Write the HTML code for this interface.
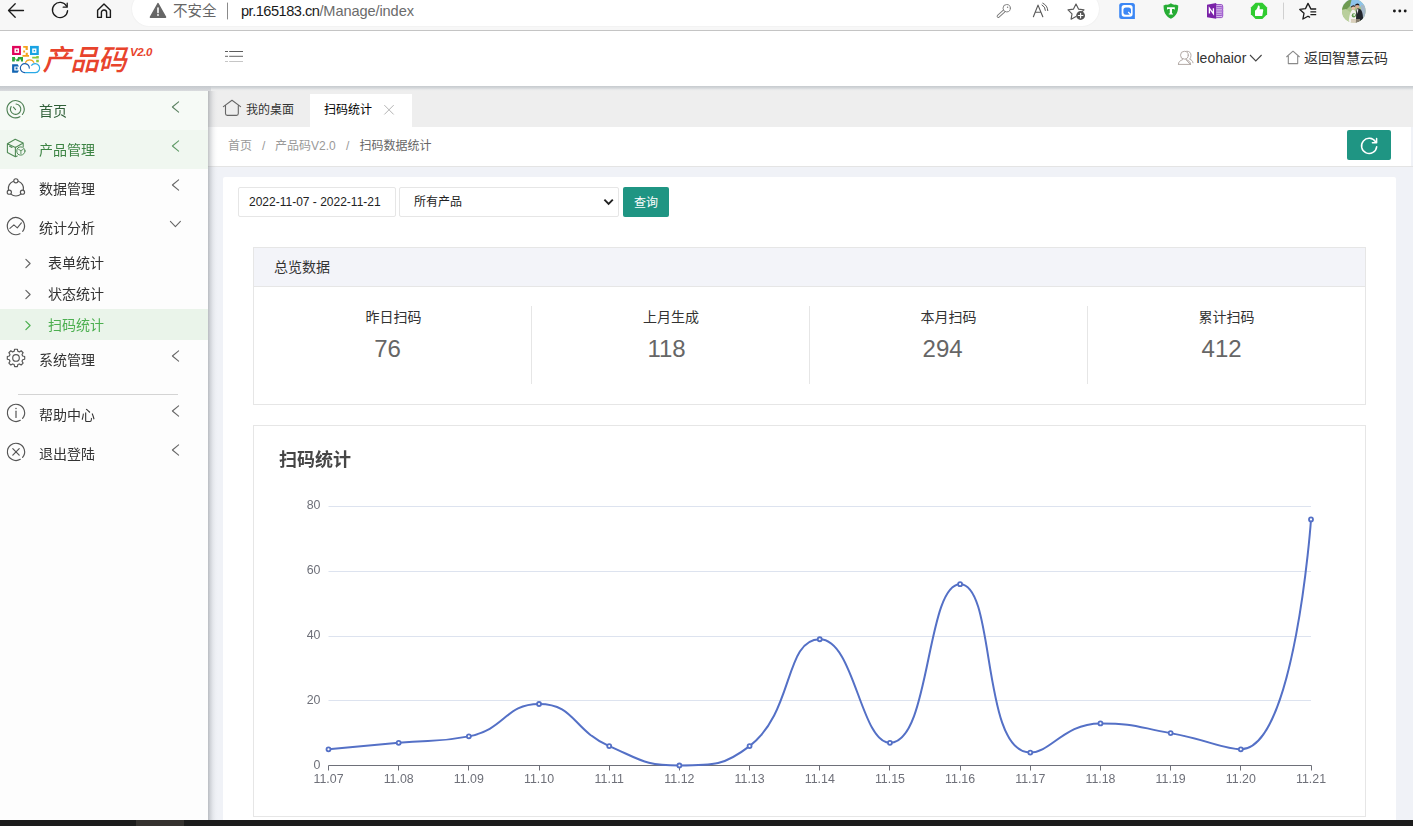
<!DOCTYPE html>
<html lang="zh-CN">
<head>
<meta charset="utf-8">
<title>产品码 V2.0</title>
<style>
*{box-sizing:border-box;margin:0;padding:0}
html,body{width:1413px;height:826px;overflow:hidden;background:#f0f2f7}
body{font-family:"Liberation Sans","Noto Sans CJK SC",sans-serif;font-size:14px;color:#333;position:relative}
#root{position:absolute;left:0;top:0;width:1413px;height:826px;overflow:hidden}
.gl{position:absolute;left:0;top:0;width:0;height:0;will-change:transform}
.abs{position:absolute}
svg{position:absolute;overflow:visible}
.t{position:absolute;white-space:nowrap;line-height:1}
/* browser toolbar */
#tb{left:0;top:0;width:1413px;height:30px;background:#f7f7f7}
#tbline{left:0;top:30px;width:1413px;height:1px;background:#c4c4c4}
#pill{left:132px;top:-8px;width:967px;height:33.500px;border-radius:17px;background:#fff;box-shadow:0 0 2px rgba(0,0,0,.07)}
/* app header */
#hd{left:0;top:31px;width:1413px;height:55px;background:#fff}
#hdsh{left:208px;top:86px;width:1205px;height:5px;background:linear-gradient(#c6cace,#d4d7da 40%,#e9eaeb 75%,#eeeeee)}
#hdsh2{left:0;top:86px;width:211px;height:5px;background:linear-gradient(#c5c9cd,#cfd2d6 60%,#dadcdf)}
/* sidebar */
#sb{left:0;top:91px;width:208px;height:730px;background:#fdfdfd}
#sbsh{left:208px;top:90px;width:10px;height:730px;background:linear-gradient(90deg,rgba(115,120,126,.44),rgba(130,135,142,.27) 25%,rgba(150,155,162,.13) 50%,rgba(180,182,190,.04) 78%,rgba(200,200,205,0))}
.mi{position:absolute;left:0;width:208px;height:39px}
.mi .t{left:39px;top:13px;font-size:14px;color:#333}
.si{position:absolute;left:0;width:208px;height:31px}
.si .t{left:48px;top:9px;font-size:14px;color:#333}
/* main */
#tabs{left:208px;top:91px;width:1205px;height:36px;background:#eeeeee}
#tabact{left:310px;top:94px;width:102px;height:33px;background:#fff}
#bc{left:208px;top:127px;width:1203px;height:39px;background:#fff}
#bcline{left:208px;top:166px;width:1205px;height:1px;background:#e4e4e4}
#card{left:223px;top:177px;width:1173px;height:660px;background:#fff;border-radius:2px}
#taskbar{left:0;top:819.700px;width:1413px;height:6.300px;background:#1c1c1c}
#taskhl{left:136px;top:819.700px;width:48px;height:6.300px;background:#35322f}
</style>
</head>
<body>
<div id="root">
<!-- ===== browser toolbar ===== -->
<div class="abs" id="tb"></div>
<div class="abs" id="pill"></div>
<div class="abs" id="tbline"></div>
<!--TOOLBAR--><svg style="left:0;top:0" width="1413" height="30" viewBox="0 0 1413 30" fill="none" stroke-linecap="round" stroke-linejoin="round">
 <!-- back -->
 <path d="M23.5 10.5H8.6M15.2 3.8L8.5 10.5L15.2 17.2" stroke="#1b1b1b" stroke-width="1.3"/>
 <!-- refresh -->
 <path d="M66.6 6.2A7.6 7.6 0 1 0 67.6 10.6" stroke="#1b1b1b" stroke-width="1.3"/>
 <path d="M67.2 3.2V7.2H63.2" stroke="#1b1b1b" stroke-width="1.3"/>
 <!-- home -->
 <path d="M97.6 10.2L104 4L110.4 10.2V17.4H106.6V12.6A2.6 2.6 0 0 0 101.4 12.6V17.4H97.6Z" stroke="#1b1b1b" stroke-width="1.4"/>
 <!-- warning -->
 <path d="M158 3.6L165.6 17.2H150.4Z" fill="#666" stroke="#666" stroke-width="1.4"/>
 <path d="M158 8V12.6" stroke="#fff" stroke-width="1.6"/>
 <circle cx="158" cy="15" r="0.9" fill="#fff"/>
 <!-- separator -->
 <path d="M227.5 3V19" stroke="#8a8a8a" stroke-width="1"/>
 <!-- key -->
 <path d="M1004.400 10.800L998.300 16.200" stroke="#7d7d7d" stroke-width="3.300"/>
 <path d="M1004.400 10.800L998.300 16.200" stroke="#fff" stroke-width="1.500"/>
 <circle cx="1006.700" cy="8.200" r="3.700" fill="#fff" stroke="#7d7d7d" stroke-width="0.950"/>
 <circle cx="1007.600" cy="7.300" r="0.700" fill="#7d7d7d" stroke="none"/>
 <!-- read aloud -->
 <path d="M1033.400 16.700L1038 5.100L1042.800 16.700M1035.200 12.200H1040.800" stroke="#5a5a5a" stroke-width="1.150"/>
 <path d="M1042 5A6 6 0 0 1 1045.400 10.400M1042.800 3.200A8.600 8.600 0 0 1 1047.800 10.600" stroke="#5a5a5a" stroke-width="1"/>
 <!-- star plus -->
 <path d="M1076 4L1078.500 9.100L1084 9.900L1080 13.800L1080.900 17.600M1076 4L1073.500 9.100L1068 9.900L1072 13.800L1071.100 19.200L1076 16.600" stroke="#5a5a5a" stroke-width="1.150"/>
 <circle cx="1080.600" cy="15.500" r="4.400" fill="#555" stroke="none"/>
 <path d="M1078.300 15.500H1082.900M1080.600 13.200V17.800" stroke="#fff" stroke-width="1.150"/>
 <!-- ext Q -->
 <path d="M1121.700 3H1132.400A2.500 2.500 0 0 1 1134.900 5.500V19H1121.700A2.500 2.500 0 0 1 1119.200 16.500V5.500A2.500 2.500 0 0 1 1121.700 3Z" fill="#3b87f5" stroke="none"/>
 <rect x="1121.600" y="5" width="11" height="11.700" rx="2.600" fill="#fff" stroke="none"/>
 <rect x="1123.400" y="7.400" width="7.600" height="7.400" rx="2.500" fill="#3b87f5" stroke="none"/>
 <path d="M1128.200 12L1131.400 15.200" stroke="#fff" stroke-width="1.300" stroke-linecap="butt"/>
 <!-- shield -->
 <path d="M1163.600 5.200C1164.600 5.400 1165.400 5 1165.800 4.400C1167.400 5 1169.400 4.600 1170.900 3.300C1172.400 4.600 1174.400 5 1176 4.400C1176.400 5 1177.200 5.400 1178.200 5.200C1178.400 11.600 1176.400 16 1170.900 18.800C1165.400 16 1163.400 11.600 1163.600 5.200Z" fill="#27ad35" stroke="none"/>
 <path d="M1167 7.200H1174.800V9.600H1174V8.900H1172V13.600H1173V14.600H1168.800V13.600H1169.800V8.900H1167.800V9.600H1167Z" fill="#fff" stroke="none"/>
 <!-- onenote -->
 <rect x="1215" y="4.600" width="7.600" height="13" rx="1.200" fill="#d9bfec" stroke="#8a3dbd" stroke-width="0.900"/>
 <path d="M1216.400 6.600H1221.800M1216.400 8.800H1221.800M1216.400 11H1221.800M1216.400 13.200H1221.800M1216.400 15.400H1221.800" stroke="#9a57c8" stroke-width="1.100" stroke-linecap="butt"/>
 <path d="M1221.600 6.400H1223.200V9H1221.600ZM1221.600 9.800H1223.200V12.400H1221.600ZM1221.600 13.200H1223.200V15.800H1221.600Z" fill="#a868d4" stroke="none"/>
 <path d="M1207 4.700L1216.200 3V18.800L1207 17.200Z" fill="#7a22a8" stroke="none"/>
 <path d="M1209.400 13.600V8.200L1213.400 13.600V8.200" stroke="#fff" stroke-width="1.350" stroke-linecap="butt" stroke-linejoin="miter"/>
 <!-- thumb -->
 <path d="M1255.600 2.800H1262.400L1267.100 7.500V14.300L1262.400 19H1255.600L1250.900 14.300V7.500Z" fill="#30cc30" stroke="none"/>
 <path d="M1255.200 10.600C1256.800 9.600 1257.600 8 1258 5.600C1259.400 5.200 1260.200 6.600 1259.600 9.200H1262.400C1263.200 9.200 1263.400 9.800 1263.200 10.600L1262.400 15.200C1262.300 15.800 1262 16.100 1261.400 16.100H1255.800C1255.200 16.100 1255 15.800 1255 15.200V11.200C1255 10.900 1255 10.700 1255.200 10.600Z" fill="#fff" stroke="none"/>
 <!-- separator 2 -->
 <path d="M1283.500 3V19" stroke="#d0d0d0" stroke-width="1"/>
 <!-- favorites -->
 <path d="M1310.600 8.400L1308 3.400L1305.500 8.600L1299.800 9.400L1304 13.300L1302.900 19L1308 16.200L1309.600 17.100" stroke="#1b1b1b" stroke-width="1.300"/>
 <path d="M1310.400 9H1316.200M1310.400 11.800H1316.200M1310.400 14.600H1316.200" stroke="#1b1b1b" stroke-width="1.300" stroke-linecap="butt"/>
 <!-- dots -->
 <circle cx="1394.400" cy="11" r="1.450" fill="#1b1b1b" stroke="none"/><circle cx="1399.800" cy="11" r="1.450" fill="#1b1b1b" stroke="none"/><circle cx="1405.200" cy="11" r="1.450" fill="#1b1b1b" stroke="none"/>
 <!-- avatar -->
 <defs><clipPath id="avc"><circle cx="1353.800" cy="11" r="11.800"/></clipPath>
 <linearGradient id="avg" x1="0" y1="0" x2="0" y2="1"><stop offset="0" stop-color="#b9c7c4"/><stop offset="0.550" stop-color="#9fb39a"/><stop offset="1" stop-color="#7f9a6f"/></linearGradient></defs>
 <g clip-path="url(#avc)" stroke="none">
  <rect x="1341" y="-2" width="26" height="26" fill="#a9c58a"/>
  <rect x="1341" y="-2" width="26" height="8.500" fill="#8ec4ea"/>
  <path d="M1341 -2H1352L1350 6L1346 10H1341Z" fill="#6f9a52"/>
  <path d="M1341 10L1346 9L1350 12V23H1341Z" fill="#b9cf9c"/>
  <path d="M1361 5H1367V23H1361Z" fill="#a5b8c9"/>
  <path d="M1353.200 9.800C1355.800 10 1356.800 13 1357 23H1348.600C1349.200 15 1350.600 10 1353.200 9.800Z" fill="#f3f1ee"/>
  <path d="M1357.400 8.200C1361.400 8.400 1363 11 1363.200 21L1358 23H1355.800C1356.600 16 1355.600 9 1357.400 8.200Z" fill="#23262c"/>
  <path d="M1356.600 9.200L1357.600 14L1358.400 9.200Z" fill="#e9e9ee"/>
  <circle cx="1353.200" cy="8" r="1.900" fill="#e6bfa6"/><circle cx="1357.200" cy="6.600" r="2" fill="#d9ad92"/>
  <path d="M1350.800 7.800A2.400 2.400 0 0 1 1355.400 6.800L1353 6.600Z" fill="#2b2320"/><path d="M1355 5.800A2.300 2.300 0 0 1 1359.600 5.600L1357 5Z" fill="#1f1a18"/>
  <circle cx="1353.800" cy="15.400" r="2.100" fill="#5f9a4e"/><circle cx="1354.200" cy="15" r="0.900" fill="#f5f5f0"/>
  <path d="M1351 19H1360V23H1351Z" fill="#c8b79a" opacity="0.600"/>
 </g>
</svg>
<div class="t" style="left:173px;top:4px;font-size:14.5px;color:#666">不安全</div>
<div class="t" style="left:241px;top:3.5px;font-size:14.6px;color:#6b6b6b;letter-spacing:-0.1px"><span style="color:#1a1a1a;letter-spacing:-0.500px">pr.165183.cn</span>/Manage/index</div>
<!--/TOOLBAR-->
<!-- ===== app header ===== -->
<div class="abs" id="hd"></div>
<!--HEADER--><svg style="left:0;top:31px" width="1413" height="55" viewBox="0 31 1413 55" fill="none">
 <!-- logo: qr + cloud -->
 <g stroke="none">
  <rect x="12.050" y="45.900" width="8.850" height="9.100" fill="#e0065c"/>
  <rect x="14.450" y="48.300" width="4.600" height="4.600" fill="#fff"/>
  <rect x="16" y="49.800" width="1.600" height="1.600" fill="#e0065c"/>
  <path d="M23.200 46H27.800V49.900H25.600V47.700H23.200ZM23.200 50.400H25.100V52.600H23.200ZM25.700 52.800H27.800V55H29V56.700H22.500V55H25.700Z" fill="#f5a21d"/>
  <rect x="30" y="45.900" width="8.800" height="9.100" fill="#1aa3e3"/>
  <rect x="32.200" y="48.500" width="4.200" height="4.400" fill="#fff"/>
  <rect x="33.600" y="49.900" width="1.500" height="1.600" fill="#1aa3e3"/>
  <path d="M12.100 57.100H15V58.300L16.400 59.400L17.900 58.300V57.100H23V61.600H20.900V59.500H19.300V61.200H16.200V59.500H14.800V61.600H12.100Z" fill="#2da639"/>
  <path d="M32.200 56.800H36.300V56H38.800V58.600H32.200ZM36.200 59.800H38.800V62.300H36.200Z" fill="#8cc63e"/>
  <path d="M12.100 64.200H17.600L19 66.500H14.300V70.500H19L17.600 72.800H12.100Z" fill="#1265b3"/>
  <rect x="15.600" y="67.400" width="1.900" height="2" fill="#1265b3"/>
 </g>
 <path d="M25.300 62.900A4.700 4.700 0 0 1 34.100 62.900" stroke="#f5a623" stroke-width="1.150"/>
 <path d="M25 72.600A4.500 4.500 0 1 1 29.300 68.600" stroke="#1a5fae" stroke-width="1.150"/>
 <path d="M31.300 65.600A4.550 4.550 0 1 1 35.200 72.650H25" stroke="#29a9e6" stroke-width="1.150"/>
 <!-- menu toggle -->
 <g stroke-width="1.100" stroke-linecap="butt">
  <path d="M229.200 51.500H243M225 51.500H228" stroke="#5c5c5c"/>
  <path d="M229.200 56.400H243M225 56.400H228" stroke="#838383"/>
  <path d="M229.200 61.500H243M225 61.500H228" stroke="#c6c6c6"/>
 </g>
 <!-- user icon -->
 <g stroke="#b3aaa6" stroke-width="1" stroke-linejoin="round" stroke-linecap="round">
  <circle cx="1184.400" cy="55.200" r="3.900"/>
  <path d="M1178.400 64.400C1178.400 61.800 1179.800 60.800 1182.600 59.600M1186.200 59.600C1189 60.800 1190.600 61.800 1190.600 64.400Z"/>
  <path d="M1178.400 64.400H1190.600"/>
  <path d="M1186.800 51.200C1189.400 51 1191.200 53 1191 55.600C1190.900 57.200 1190.400 58.400 1189.600 59.200C1191.800 60 1192.800 61 1193 62.800"/>
 </g>
 <!-- chevron down -->
 <path d="M1250 55L1255.800 61L1261.600 55" stroke="#444" stroke-width="1.100"/>
 <!-- home outline -->
 <path d="M1286.400 57L1293 51.200L1299.600 57M1288.300 56V63.600H1297.700V56" stroke="#8a8a8a" stroke-width="1.100" stroke-linejoin="round"/>
</svg>
<div class="t" style="left:42.600px;top:45.500px;font-size:28.600px;font-weight:500;font-style:italic;color:#e8432c;letter-spacing:-0.900px">产品码</div>
<div class="t" style="left:130px;top:46.500px;font-size:11.500px;font-weight:bold;font-style:italic;color:#e8432c;letter-spacing:-0.400px">V2.0</div>
<div class="t" style="left:1196.500px;top:51px;font-size:14px;color:#333">leohaior</div>
<div class="t" style="left:1304px;top:50.500px;font-size:14px;color:#333">返回智慧云码</div>
<!--/HEADER-->
<!-- ===== main bg parts ===== -->
<div class="abs" id="tabs"></div>
<div class="abs" id="tabact"></div>
<div class="abs" id="bc"></div>
<div class="abs" id="bcline"></div>
<div class="abs" id="card"></div>
<!--MAIN--><svg style="left:208px;top:91px" width="1205" height="80" viewBox="208 91 1205 80" fill="none" stroke-linecap="round" stroke-linejoin="round">
 <path d="M223.400 106.600L232 100.300L240.600 106.600M225.500 105.400V113.600Q225.500 115.400 227.300 115.400H236.500Q238.300 115.400 238.300 113.600V105.400" stroke="#666" stroke-width="1.100"/>
 <path d="M384.600 105.400L393.400 114.200M393.400 105.400L384.600 114.200" stroke="#b5b5b5" stroke-width="1"/>
 <rect x="1347" y="130" width="44" height="30" rx="2" fill="#1f9583" stroke="none"/>
 <path d="M1375.600 141.900A7.600 7.600 0 1 0 1376.700 146.700" stroke="#fff" stroke-width="1.500"/>
 <path d="M1376.600 138.500V142.700H1372.400" stroke="#fff" stroke-width="1.500"/>
</svg>
<div class="t" style="left:246px;top:104px;font-size:12px;color:#333">我的桌面</div>
<div class="t" style="left:324px;top:104px;font-size:12px;color:#000">扫码统计</div>
<div class="t" style="left:228px;top:140px;font-size:12px;color:#999">首页</div>
<div class="t" style="left:262px;top:140px;font-size:12px;color:#999">/</div>
<div class="t" style="left:275px;top:140px;font-size:12px;color:#999">产品码V2.0</div>
<div class="t" style="left:346px;top:140px;font-size:12px;color:#999">/</div>
<div class="t" style="left:359.500px;top:140px;font-size:12px;color:#666">扫码数据统计</div>
<div class="abs" style="left:238px;top:187px;width:158px;height:30px;border:1px solid #e6e6e6;border-radius:2px;background:#fff"></div>
<div class="t" style="left:249px;top:196px;font-size:12px;color:#222">2022-11-07 - 2022-11-21</div>
<div class="abs" style="left:399px;top:187px;width:220px;height:30px;border:1px solid #e6e6e6;border-radius:2px;background:#fff"></div>
<div class="t" style="left:414px;top:196px;font-size:12px;color:#222">所有产品</div>
<svg style="left:603px;top:197px" width="12" height="10" viewBox="0 0 12 10" fill="none"><path d="M1.400 2.600L5.600 6.800L9.800 2.600" stroke="#222" stroke-width="1.900"/></svg>
<div class="abs" style="left:623px;top:187px;width:46px;height:30px;border-radius:2px;background:#1f9583"></div>
<div class="t" style="left:634px;top:196.500px;font-size:12px;color:#fff">查询</div>
<div class="abs" style="left:253px;top:247px;width:1113px;height:158px;border:1px solid #e6e6e6;background:#fff"></div>
<div class="abs" style="left:254px;top:248px;width:1111px;height:38px;background:#f3f4f9"></div>
<div class="abs" style="left:254px;top:286px;width:1111px;height:1px;background:#e6e6e6"></div>
<div class="t" style="left:274px;top:260px;font-size:14px;color:#333">总览数据</div>
<div class="t" style="left:365.4px;top:310px;font-size:14px;color:#333">昨日扫码</div>
<div class="t" style="left:374.2px;top:336.500px;font-size:24px;color:#666">76</div>
<div class="t" style="left:643.0px;top:310px;font-size:14px;color:#333">上月生成</div>
<div class="t" style="left:647.4px;top:336.500px;font-size:24px;color:#666">118</div>
<div class="t" style="left:920.6px;top:310px;font-size:14px;color:#333">本月扫码</div>
<div class="t" style="left:922.6px;top:336.500px;font-size:24px;color:#666">294</div>
<div class="t" style="left:1198.4px;top:310px;font-size:14px;color:#333">累计扫码</div>
<div class="t" style="left:1201.6px;top:336.500px;font-size:24px;color:#666">412</div>
<div class="abs" style="left:531px;top:306px;width:1px;height:78px;background:#e6e6e6"></div>
<div class="abs" style="left:809px;top:306px;width:1px;height:78px;background:#e6e6e6"></div>
<div class="abs" style="left:1087px;top:306px;width:1px;height:78px;background:#e6e6e6"></div>
<div class="abs" style="left:253px;top:425px;width:1113px;height:392px;border:1px solid #e6e6e6;background:#fff"></div>
<div class="t" style="left:278.700px;top:450.700px;font-size:18px;font-weight:bold;color:#464646;will-change:transform">扫码统计</div>
<svg style="left:253px;top:480px;will-change:transform" width="1113" height="330" viewBox="253 480 1113 330" fill="none">
 <path d="M328.500 506.50H1311" stroke="#dde3ef" stroke-width="1"/>
 <path d="M328.500 571.50H1311" stroke="#dde3ef" stroke-width="1"/>
 <path d="M328.500 636.50H1311" stroke="#dde3ef" stroke-width="1"/>
 <path d="M328.500 700.50H1311" stroke="#dde3ef" stroke-width="1"/>
 <path d="M328.500 765.500H1311.500" stroke="#6e7079" stroke-width="1"/>
 <path d="M328.5 765.500V770.500" stroke="#6e7079" stroke-width="1"/>
 <path d="M398.5 765.500V770.500" stroke="#6e7079" stroke-width="1"/>
 <path d="M468.5 765.500V770.500" stroke="#6e7079" stroke-width="1"/>
 <path d="M539.5 765.500V770.500" stroke="#6e7079" stroke-width="1"/>
 <path d="M609.5 765.500V770.500" stroke="#6e7079" stroke-width="1"/>
 <path d="M679.5 765.500V770.500" stroke="#6e7079" stroke-width="1"/>
 <path d="M749.5 765.500V770.500" stroke="#6e7079" stroke-width="1"/>
 <path d="M819.5 765.500V770.500" stroke="#6e7079" stroke-width="1"/>
 <path d="M889.5 765.500V770.500" stroke="#6e7079" stroke-width="1"/>
 <path d="M960.5 765.500V770.500" stroke="#6e7079" stroke-width="1"/>
 <path d="M1030.5 765.500V770.500" stroke="#6e7079" stroke-width="1"/>
 <path d="M1100.5 765.500V770.500" stroke="#6e7079" stroke-width="1"/>
 <path d="M1170.5 765.500V770.500" stroke="#6e7079" stroke-width="1"/>
 <path d="M1240.5 765.500V770.500" stroke="#6e7079" stroke-width="1"/>
 <path d="M1311.5 765.500V770.500" stroke="#6e7079" stroke-width="1"/>
 <g font-family="Liberation Sans, sans-serif" font-size="12.400" fill="#6e7079">
  <text x="320.500" y="509" text-anchor="end">80</text>
  <text x="320.500" y="574" text-anchor="end">60</text>
  <text x="320.500" y="639" text-anchor="end">40</text>
  <text x="320.500" y="704" text-anchor="end">20</text>
  <text x="320.500" y="769" text-anchor="end">0</text>
  <text x="328.50" y="783" text-anchor="middle">11.07</text>
  <text x="398.68" y="783" text-anchor="middle">11.08</text>
  <text x="468.86" y="783" text-anchor="middle">11.09</text>
  <text x="539.04" y="783" text-anchor="middle">11.10</text>
  <text x="609.21" y="783" text-anchor="middle">11.11</text>
  <text x="679.39" y="783" text-anchor="middle">11.12</text>
  <text x="749.57" y="783" text-anchor="middle">11.13</text>
  <text x="819.75" y="783" text-anchor="middle">11.14</text>
  <text x="889.93" y="783" text-anchor="middle">11.15</text>
  <text x="960.11" y="783" text-anchor="middle">11.16</text>
  <text x="1030.29" y="783" text-anchor="middle">11.17</text>
  <text x="1100.46" y="783" text-anchor="middle">11.18</text>
  <text x="1170.64" y="783" text-anchor="middle">11.19</text>
  <text x="1240.82" y="783" text-anchor="middle">11.20</text>
  <text x="1311.00" y="783" text-anchor="middle">11.21</text>
 </g>
<path d="M328.50 749.31 C328.50 749.31 363.59 746.08 398.68 742.84 C433.77 739.60 435.38 742.84 468.86 736.36 C505.56 729.26 504.95 703.99 539.04 703.99 C575.13 703.99 572.08 729.80 609.21 746.08 C642.26 760.56 644.30 765.50 679.39 765.50 C714.48 765.50 724.10 765.50 749.57 746.08 C794.28 711.98 784.29 639.24 819.75 639.24 C854.47 639.24 860.52 742.84 889.93 742.84 C930.70 742.84 925.90 584.20 960.11 584.20 C996.08 584.20 980.75 752.55 1030.29 752.55 C1050.92 752.55 1064.15 723.41 1100.46 723.41 C1134.33 723.41 1135.84 726.70 1170.64 733.12 C1206.02 739.65 1224.64 749.31 1240.82 749.31 C1294.82 749.31 1311.00 519.45 1311.00 519.45" fill="none" stroke="#5470c6" stroke-width="2" stroke-linejoin="bevel"/>
<circle cx="328.50" cy="749.31" r="2" fill="#fff" stroke="#5470c6" stroke-width="1.800"/>
<circle cx="398.68" cy="742.84" r="2" fill="#fff" stroke="#5470c6" stroke-width="1.800"/>
<circle cx="468.86" cy="736.36" r="2" fill="#fff" stroke="#5470c6" stroke-width="1.800"/>
<circle cx="539.04" cy="703.99" r="2" fill="#fff" stroke="#5470c6" stroke-width="1.800"/>
<circle cx="609.21" cy="746.08" r="2" fill="#fff" stroke="#5470c6" stroke-width="1.800"/>
<circle cx="679.39" cy="765.50" r="2" fill="#fff" stroke="#5470c6" stroke-width="1.800"/>
<circle cx="749.57" cy="746.08" r="2" fill="#fff" stroke="#5470c6" stroke-width="1.800"/>
<circle cx="819.75" cy="639.24" r="2" fill="#fff" stroke="#5470c6" stroke-width="1.800"/>
<circle cx="889.93" cy="742.84" r="2" fill="#fff" stroke="#5470c6" stroke-width="1.800"/>
<circle cx="960.11" cy="584.20" r="2" fill="#fff" stroke="#5470c6" stroke-width="1.800"/>
<circle cx="1030.29" cy="752.55" r="2" fill="#fff" stroke="#5470c6" stroke-width="1.800"/>
<circle cx="1100.46" cy="723.41" r="2" fill="#fff" stroke="#5470c6" stroke-width="1.800"/>
<circle cx="1170.64" cy="733.12" r="2" fill="#fff" stroke="#5470c6" stroke-width="1.800"/>
<circle cx="1240.82" cy="749.31" r="2" fill="#fff" stroke="#5470c6" stroke-width="1.800"/>
<circle cx="1311.00" cy="519.45" r="2" fill="#fff" stroke="#5470c6" stroke-width="1.800"/>

</svg>
<!--/MAIN-->
<!-- ===== sidebar ===== -->
<div class="abs" id="sb"></div>
<div class="abs" id="sbsh"></div>
<div class="gl"><!--SIDEBAR--><div class="abs" style="left:0;top:91px;width:208px;height:39px;background:#f6faf6"></div>
<div class="abs" style="left:0;top:130px;width:208px;height:39px;background:#f0f7f0"></div>
<div class="abs" style="left:0;top:309px;width:208px;height:31px;background:#eaf4ea"></div>
<div class="abs" style="left:18px;top:394px;width:160px;height:1px;background:#d4d4d4"></div>
<div class="t" style="left:39px;top:103.5px;font-size:14px;color:#2f5f38">首页</div>
<div class="t" style="left:39px;top:142.5px;font-size:14px;color:#3d8444">产品管理</div>
<div class="t" style="left:39px;top:181.5px;font-size:14px;color:#333">数据管理</div>
<div class="t" style="left:39px;top:220.5px;font-size:14px;color:#333">统计分析</div>
<div class="t" style="left:39px;top:352.5px;font-size:14px;color:#333">系统管理</div>
<div class="t" style="left:39px;top:407.5px;font-size:14px;color:#333">帮助中心</div>
<div class="t" style="left:39px;top:446.5px;font-size:14px;color:#333">退出登陆</div>
<div class="t" style="left:48px;top:256.0px;font-size:14px;color:#333">表单统计</div>
<div class="t" style="left:48px;top:287.0px;font-size:14px;color:#333">状态统计</div>
<div class="t" style="left:48px;top:318.0px;font-size:14px;color:#4caf50">扫码统计</div>
<svg style="left:0;top:91px" width="208" height="729" viewBox="0 91 208 729" fill="none" stroke-linecap="round" stroke-linejoin="round">
<path d="M178.600 101.8L172.400 107.0L178.600 112.2" stroke="#5a8060" stroke-width="1.100"/>
<path d="M178.600 140.8L172.400 146.0L178.600 151.2" stroke="#5f9a66" stroke-width="1.100"/>
<path d="M178.600 179.8L172.400 185.0L178.600 190.2" stroke="#666" stroke-width="1.100"/>
<path d="M170.400 221.4L175.400 226.6L180.400 221.4" stroke="#666" stroke-width="1.100"/>
<path d="M178.600 350.8L172.400 356.0L178.600 361.2" stroke="#666" stroke-width="1.100"/>
<path d="M178.600 405.8L172.400 411.0L178.600 416.2" stroke="#666" stroke-width="1.100"/>
<path d="M178.600 444.8L172.400 450.0L178.600 455.2" stroke="#666" stroke-width="1.100"/>
<path d="M25.900 259.4L30.100 263.5L25.900 267.6" stroke="#666" stroke-width="1.200"/>
<path d="M25.900 290.4L30.100 294.5L25.900 298.6" stroke="#666" stroke-width="1.200"/>
<path d="M25.900 321.4L30.100 325.5L25.900 329.6" stroke="#4caf50" stroke-width="1.200"/>
<path d="M19.90 116.65A8.600 8.600 0 1 1 22.38 114.49" stroke="#4c7f52" stroke-width="1.100"/>
<path d="M16.05 104.02A5.200 5.200 0 1 1 11.10 106.60" stroke="#4c7f52" stroke-width="1.100"/>
<path d="M15.60 109.70L13.40 107.20" stroke="#4c7f52" stroke-width="1.100"/>
<path d="M15.200 139.300L7.400 143.700L15.400 147.400L23.200 143L15.200 139.300ZM7.400 143.700V152.600L15.400 156.800V147.400M23.200 143V146.600M15.400 156.800L17.200 155.900M9.600 146.300L12 147.500" stroke="#4f8a55" stroke-width="1.100"/>
<circle cx="20.900" cy="151" r="4.100" stroke="#4f8a55" stroke-width="1"/>
<path d="M18.600 149.400L20.900 150.600L23.200 149.400M20.900 150.600V153.600" stroke="#4f8a55" stroke-width="0.900"/>
<circle cx="15.90" cy="180.80" r="2.1" stroke="#555" stroke-width="1.150"/>
<circle cx="22.48" cy="192.20" r="2.1" stroke="#555" stroke-width="1.150"/>
<circle cx="9.32" cy="192.20" r="2.1" stroke="#555" stroke-width="1.150"/>
<path d="M18.37 181.21A7.6 7.6 0 0 1 23.36 189.85" stroke="#555" stroke-width="1.150"/>
<path d="M20.89 194.14A7.6 7.6 0 0 1 10.91 194.14" stroke="#555" stroke-width="1.150"/>
<path d="M8.44 189.85A7.6 7.6 0 0 1 13.43 181.21" stroke="#555" stroke-width="1.150"/>
<path d="M19.94 233.69A8.600 8.600 0 1 1 22.68 231.39" stroke="#555" stroke-width="1.150"/>
<path d="M9.900 228.400L13.900 224.900L17.300 227.800L21.400 222.900" stroke="#555" stroke-width="1.100"/>
<path d="M14.16 351.25L14.62 349.21L17.38 349.21L17.84 351.25L19.40 351.89L21.17 350.78L23.12 352.73L22.01 354.50L22.65 356.06L24.69 356.52L24.69 359.28L22.65 359.74L22.01 361.30L23.12 363.07L21.17 365.02L19.40 363.91L17.84 364.55L17.38 366.59L14.62 366.59L14.16 364.55L12.60 363.91L10.83 365.02L8.88 363.07L9.99 361.30L9.35 359.74L7.31 359.28L7.31 356.52L9.35 356.06L9.99 354.50L8.88 352.73L10.83 350.78L12.60 351.89Z" stroke="#555" stroke-width="1.150"/>
<circle cx="16.0" cy="357.9" r="3.300" stroke="#555" stroke-width="1.150"/>
<path d="M20.30 420.35A8.600 8.600 0 1 1 22.59 418.43" stroke="#555" stroke-width="1.150"/>
<path d="M16 411.200V417.400" stroke="#555" stroke-width="1.200"/><circle cx="16" cy="408.500" r="0.750" fill="#555"/>
<path d="M20.30 459.35A8.600 8.600 0 1 1 22.59 457.43" stroke="#555" stroke-width="1.150"/>
<path d="M12.800 448.700L19.200 455.100M19.200 448.700L12.800 455.100" stroke="#555" stroke-width="1.200"/>
</svg>
<!--/SIDEBAR--></div>
<div class="abs" id="hdsh"></div>
<div class="abs" id="hdsh2"></div>
<div class="abs" id="taskbar"></div>
<div class="abs" id="taskhl"></div>
</div>
</body>
</html>
